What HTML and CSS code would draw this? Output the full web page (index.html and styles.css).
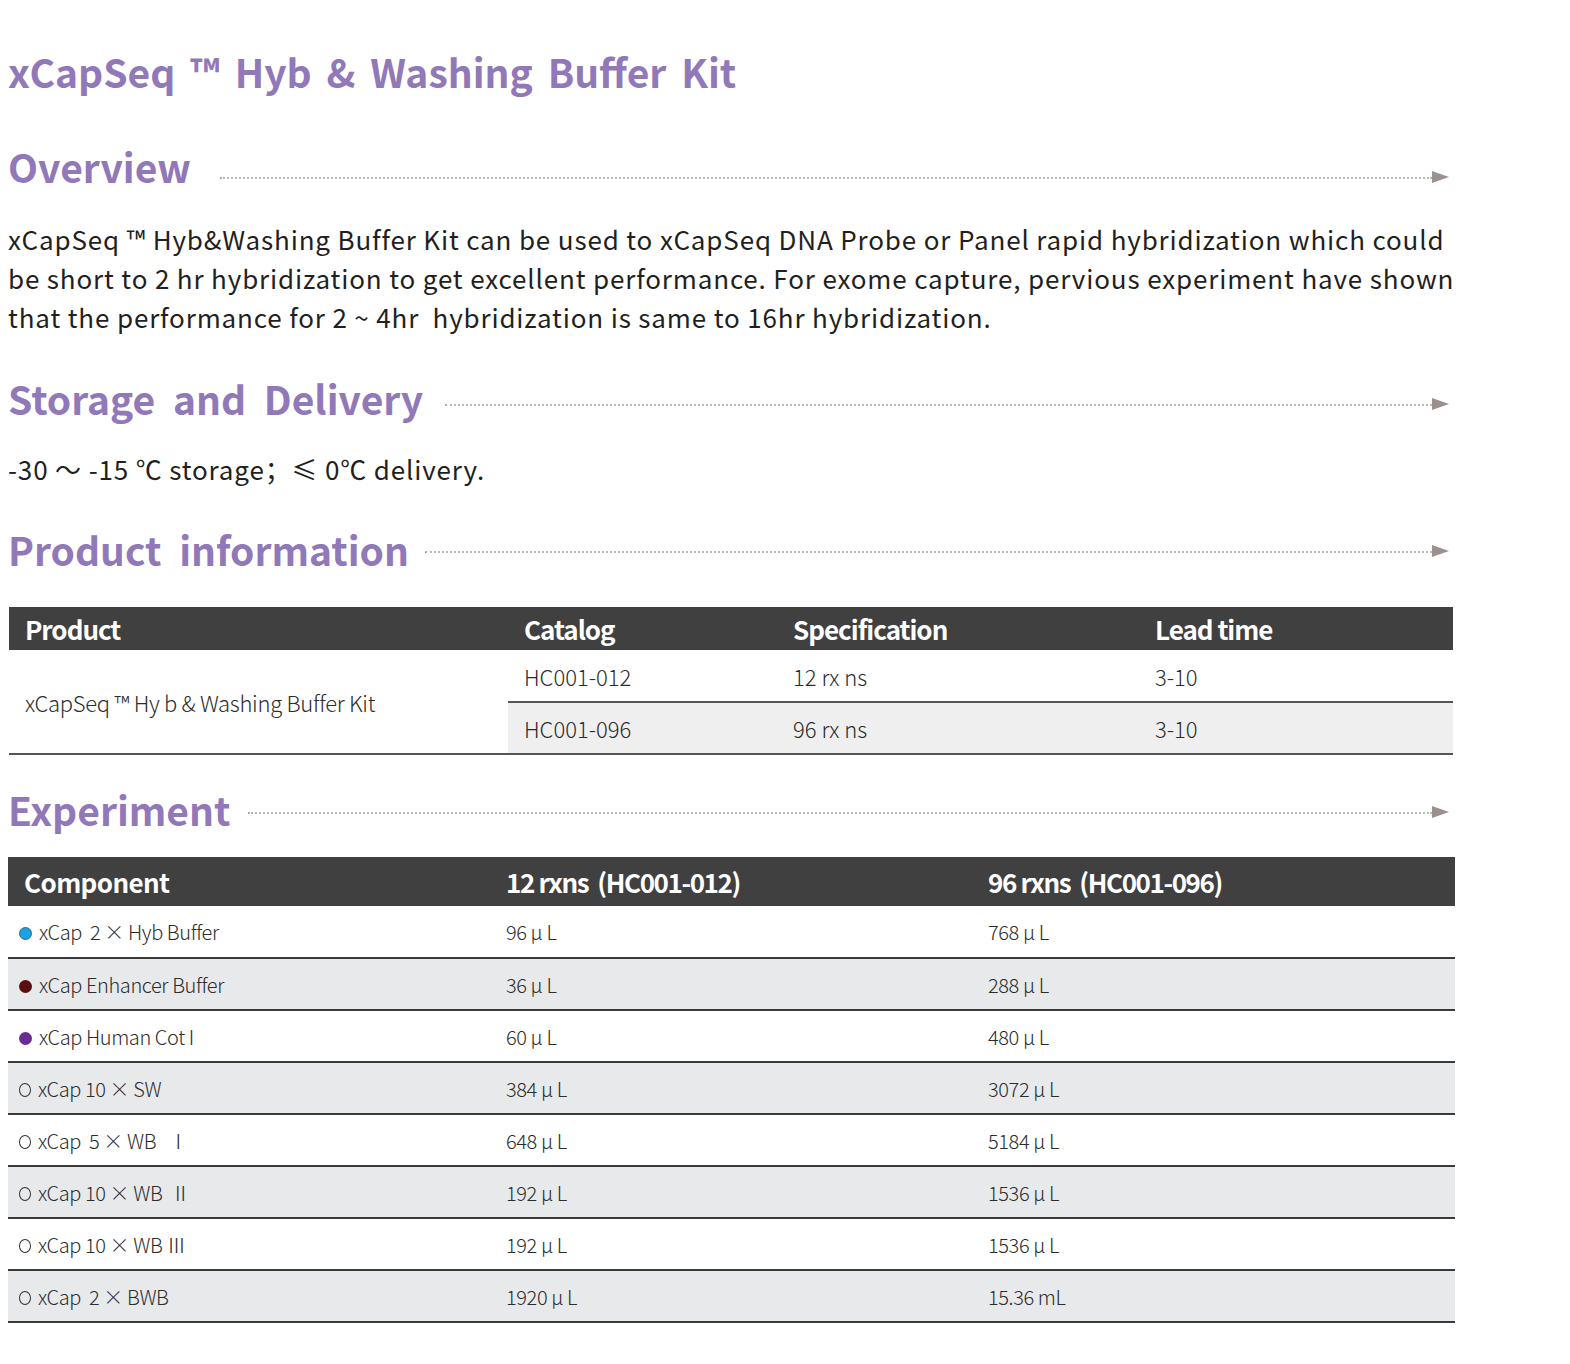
FILE: index.html
```html
<!DOCTYPE html>
<html lang="en">
<head>
    <meta charset="UTF-8">
    <title>xCapSeq Hyb &amp; Washing Buffer Kit</title>
    <link rel="stylesheet" href="styles.css">
</head>
<body>
    <div class="page">
        <!-- Title -->
        <h1 class="title">xCapSeq ™ Hyb &amp; Washing Buffer Kit</h1>

        <!-- Overview -->
        <div class="section-head overview-head">
            <h2>Overview</h2>
            <div class="rule"><span class="arrow"></span></div>
        </div>
        <p class="text overview-text">xCapSeq ™ Hyb&amp;Washing Buffer Kit can be used to xCapSeq DNA Probe or Panel rapid hybridization which could be short to 2 hr hybridization to get excellent performance. For exome capture, pervious experiment have shown that the performance for 2 ~ 4hr&nbsp; hybridization is same to 16hr hybridization.</p>

        <!-- Storage -->
        <div class="section-head storage-head">
            <h2>Storage&nbsp; and&nbsp; Delivery</h2>
            <div class="rule"><span class="arrow"></span></div>
        </div>
        <p class="text storage-text">-30 ～ -15 ℃ storage；≤ 0℃ delivery.</p>

        <!-- Product information -->
        <div class="section-head product-head">
            <h2>Product&nbsp; information</h2>
            <div class="rule"><span class="arrow"></span></div>
        </div>
        <table class="info-table">
            <thead>
                <tr>
                    <th class="c-prod">Product</th>
                    <th class="c-cat">Catalog</th>
                    <th class="c-spec">Specification</th>
                    <th class="c-lead">Lead time</th>
                </tr>
            </thead>
            <tbody>
                <tr>
                    <td rowspan="2" class="prod-name">xCapSeq ™ Hy b &amp; Washing Buffer Kit</td>
                    <td>HC001-012</td>
                    <td>12 rx ns</td>
                    <td>3-10</td>
                </tr>
                <tr class="shade">
                    <td>HC001-096</td>
                    <td>96 rx ns</td>
                    <td>3-10</td>
                </tr>
            </tbody>
        </table>

        <!-- Experiment -->
        <div class="section-head exp-head">
            <h2>Experiment</h2>
            <div class="rule"><span class="arrow"></span></div>
        </div>
        <table class="exp-table">
            <thead>
                <tr>
                    <th class="e-comp">Component</th>
                    <th class="e-12">12 rxns&nbsp; (HC001-012)</th>
                    <th class="e-96">96 rxns&nbsp; (HC001-096)</th>
                </tr>
            </thead>
            <tbody>
                <tr><td><span class="dot blue"></span>xCap&nbsp; 2 × Hyb Buffer</td><td>96 μ L</td><td>768 μ L</td></tr>
                <tr class="shade"><td><span class="dot brown"></span>xCap Enhancer Buffer</td><td>36 μ L</td><td>288 μ L</td></tr>
                <tr><td><span class="dot purple"></span>xCap Human Cot I</td><td>60 μ L</td><td>480 μ L</td></tr>
                <tr class="shade"><td><span class="dot ring"></span>xCap 10 × SW</td><td>384 μ L</td><td>3072 μ L</td></tr>
                <tr><td><span class="dot ring"></span>xCap&nbsp; 5 × WB&nbsp;&nbsp; Ⅰ</td><td>648 μ L</td><td>5184 μ L</td></tr>
                <tr class="shade"><td><span class="dot ring"></span>xCap 10 × WB&nbsp; Ⅱ</td><td>192 μ L</td><td>1536 μ L</td></tr>
                <tr><td><span class="dot ring"></span>xCap 10 × WB Ⅲ</td><td>192 μ L</td><td>1536 μ L</td></tr>
                <tr class="shade"><td><span class="dot ring"></span>xCap&nbsp; 2 × BWB</td><td>1920 μ L</td><td>15.36 mL</td></tr>
            </tbody>
        </table>
    </div>
</body>
</html>
```

FILE: styles.css
```css
* {
    margin: 0;
    padding: 0;
    box-sizing: border-box;
}

body {
    margin: 0 0 0 8px;
    font-family: "Noto Sans CJK SC", "Noto Sans", sans-serif;
    color: #231f20;
    background: #fff;
}

.page {
    width: 1448px;
    padding-top: 42px;
}

.title {
    font-size: 39px;
    font-weight: 700;
    color: #9178b8;
    line-height: 58px;
    word-spacing: 6px;
}

.section-head {
    display: flex;
    align-items: center;
}

.section-head h2 {
    font-size: 39px;
    font-weight: 700;
    color: #9178b8;
    line-height: 58px;
    white-space: nowrap;
}

.rule {
    flex: 1;
    position: relative;
    height: 2px;
    border-top: 2px dotted #bcb6b6;
    border-left: 1px solid #888;
    margin-right: 24px;
}

.arrow {
    position: absolute;
    right: -17px;
    top: -8px;
    width: 0;
    height: 0;
    border-left: 17px solid #9a918f;
    border-top: 6px solid transparent;
    border-bottom: 6px solid transparent;
}

.overview-head {
    margin-top: 37px;
}
.overview-head .rule {
    margin-left: 29px;
    margin-top: 24px;
}

.storage-head {
    margin-top: 33px;
}
.storage-head .rule {
    margin-left: 22px;
    margin-top: 14px;
}

.product-head {
    margin-top: 32px;
}
.product-head .rule {
    margin-left: 16px;
    margin-top: 6px;
}

.exp-head {
    margin-top: 25px;
}
.exp-head .rule {
    margin-left: 18px;
    margin-top: 8px;
}

.text {
    font-size: 26px;
    line-height: 39px;
    letter-spacing: 0.85px;
}

.overview-text {
    margin-top: 24px;
    width: 1456px;
}

.storage-text {
    margin-top: 22px;
}

/* product table */
.info-table {
    width: 1444px;
    margin-top: 29px;
    margin-left: 1px;
    border-collapse: collapse;
    font-size: 22px;
    font-weight: 300;
    color: #2c2c2c;
}

.info-table th,
.exp-table th {
    background: #404040;
    color: #fff;
    font-weight: 700;
    text-align: left;
    font-size: 26px;
}

.info-table th {
    height: 43px;
    padding: 0 0 0 16px;
    letter-spacing: -1px;
}

.info-table th.c-prod { width: 499px; }
.info-table th.c-cat { width: 269px; }
.info-table th.c-spec { width: 362px; }

.info-table td {
    height: 52px;
    padding: 0 0 0 16px;
    border-bottom: 2px solid #555;
}

.info-table td.prod-name {
    background: #fff;
    padding-left: 16px;
    letter-spacing: -0.3px;
}

.info-table tr.shade td {
    background: #efefef;
}

/* experiment table */
.exp-table {
    width: 1447px;
    margin-top: 19px;
    border-collapse: collapse;
    font-size: 20px;
    font-weight: 300;
    letter-spacing: -0.4px;
    color: #2c2c2c;
}

.exp-table th {
    height: 49px;
    padding: 0 0 0 16px;
    letter-spacing: -0.6px;
}

.exp-table th.e-12,
.exp-table th.e-96 {
    letter-spacing: -1.4px;
}

.exp-table th.e-comp { width: 482px; }
.exp-table th.e-12 { width: 482px; }

.exp-table td {
    height: 52px;
    padding: 0 0 0 16px;
    border-bottom: 2px solid #3a3a3a;
}

.exp-table td:first-child {
    padding-left: 11px;
}

.exp-table tr.shade td {
    background: #e8e9eb;
}

.dot {
    display: inline-block;
    width: 13px;
    height: 13px;
    border-radius: 50%;
    margin-right: 7px;
    vertical-align: 0;
}

.dot.blue { background: #1aa3e0; border: 1px solid #1c6e9a; }
.dot.brown { background: #5a1010; }
.dot.purple { background: #6a2c91; }
.dot.ring { width: 12px; height: 14px; border: 1.5px solid #333; background: transparent; }
```
